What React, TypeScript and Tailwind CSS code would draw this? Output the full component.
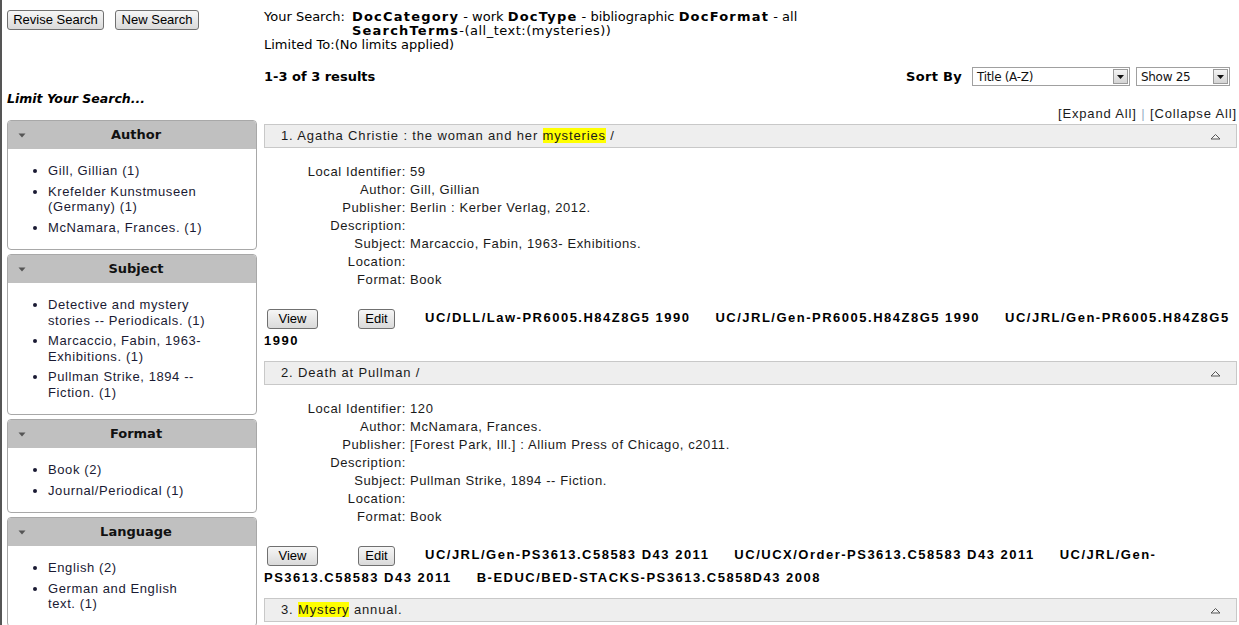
import React from "react";

const facets = [
  { title: "Author", items: ["Gill, Gillian (1)", "Krefelder Kunstmuseen (Germany) (1)", "McNamara, Frances. (1)"] },
  {
    title: "Subject",
    items: ["Detective and mystery stories -- Periodicals. (1)", "Marcaccio, Fabin, 1963- Exhibitions. (1)", "Pullman Strike, 1894 -- Fiction. (1)"],
  },
  { title: "Format", items: ["Book (2)", "Journal/Periodical (1)"] },
  { title: "Language", items: ["English (2)", "German and English text. (1)"] },
];

type Result = {
  n: number;
  title: React.ReactNode;
  fields: [string, string][];
  calls: string[];
};

const HL = ({ children }: { children: React.ReactNode }) => <span className="bg-[#ffff00]">{children}</span>;

const results: Result[] = [
  {
    n: 1,
    title: (
      <>
        Agatha Christie : the woman and her <HL>mysteries</HL> /
      </>
    ),
    fields: [
      ["Local Identifier:", "59"],
      ["Author:", "Gill, Gillian"],
      ["Publisher:", "Berlin : Kerber Verlag, 2012."],
      ["Description:", ""],
      ["Subject:", "Marcaccio, Fabin, 1963- Exhibitions."],
      ["Location:", ""],
      ["Format:", "Book"],
    ],
    calls: ["UC/DLL/Law-PR6005.H84Z8G5 1990", "UC/JRL/Gen-PR6005.H84Z8G5 1990", "UC/JRL/Gen-PR6005.H84Z8G5 1990"],
  },
  {
    n: 2,
    title: <>Death at Pullman /</>,
    fields: [
      ["Local Identifier:", "120"],
      ["Author:", "McNamara, Frances."],
      ["Publisher:", "[Forest Park, Ill.] : Allium Press of Chicago, c2011."],
      ["Description:", ""],
      ["Subject:", "Pullman Strike, 1894 -- Fiction."],
      ["Location:", ""],
      ["Format:", "Book"],
    ],
    calls: [
      "UC/JRL/Gen-PS3613.C58583 D43 2011",
      "UC/UCX/Order-PS3613.C58583 D43 2011",
      "UC/JRL/Gen-PS3613.C58583 D43 2011",
      "B-EDUC/BED-STACKS-PS3613.C5858D43 2008",
    ],
  },
];

const btn =
  "inline-block align-middle h-[20px] leading-[18px] border border-[#707070] rounded-[3px] bg-linear-to-b from-[#f6f6f6] to-[#dadada] text-[13px] text-black font-['Liberation_Sans',Arial,sans-serif] font-normal tracking-normal text-center";

function DownTri() {
  return (
    <svg width="8" height="5" viewBox="0 0 8 5" className="shrink-0">
      <polygon points="0.5,0.5 7.5,0.5 4,4.5" fill="#555" />
    </svg>
  );
}

function UpTri() {
  return (
    <svg width="11" height="7" viewBox="0 0 11 7" className="shrink-0">
      <polygon points="1,6 5.5,1.5 10,6" fill="#f4f4f4" stroke="#555" strokeWidth="1" />
    </svg>
  );
}

function SelectBox({ label, w }: { label: string; w: string }) {
  return (
    <div className={`${w} h-[19px] border border-[#a0a0a0] bg-white flex items-center justify-between pl-[4px] pr-[1px]`}>
      <span className="text-[12px] font-['DejaVu_Sans',Verdana,sans-serif] text-[#111] leading-none tracking-[-0.3px]">{label}</span>
      <span className="w-[15px] h-[15px] border border-[#9a9a9a] bg-linear-to-b from-[#f4f4f4] to-[#d4d4d4] flex items-center justify-center">
        <svg width="7" height="4" viewBox="0 0 7 4">
          <polygon points="0,0 7,0 3.5,4" fill="#111" />
        </svg>
      </span>
    </div>
  );
}

function ResultBlock({ r }: { r: Result }) {
  return (
    <div>
      <div className="h-[24px] border border-[#c8c8c8] bg-[#eeeeee] flex items-center justify-between pl-[16px] pr-[15px] text-[13px] tracking-[0.85px] text-[#1a1a1a]">
        <span>
          {r.n}. {r.title}
        </span>
        <UpTri />
      </div>
      <div className="mt-[15px] grid grid-cols-[142px_1fr] gap-x-[4px] text-[13px] leading-[18px] tracking-[0.6px] text-[#1a1a1a]">
        {r.fields.map(([k, v], i) => (
          <React.Fragment key={i}>
            <div className="text-right">{k}</div>
            <div>{v}</div>
          </React.Fragment>
        ))}
      </div>
      <div className="mt-[17px] pb-[9px] text-[13px] leading-[23px] font-bold tracking-[1.5px] text-black">
        <button className={`${btn} ml-[3px] w-[51px]`}>View</button>
        <button className={`${btn} ml-[40px] w-[37px]`}>Edit</button>
        {r.calls.map((c, i) => (
          <span key={i} className={i === 0 ? "ml-[30px]" : "ml-[25px]"}>
            {c}
          </span>
        ))}
      </div>
    </div>
  );
}

export default function App() {
  return (
    <div className="w-[1239px] h-[625px] overflow-hidden bg-white flex border-l-2 border-[#555] font-['Liberation_Sans',Arial,sans-serif] text-black">
      <aside className="w-[255px] shrink-0 pl-[5px] pt-[10px]">
        <div className="flex gap-[11px]">
          <button className={`${btn} w-[97px]`}>Revise Search</button>
          <button className={`${btn} w-[84px]`}>New Search</button>
        </div>
        <div className="mt-[62px] h-[14px] leading-[14px] text-[12.5px] font-bold italic font-['DejaVu_Sans',Verdana,sans-serif]">
          Limit Your Search...
        </div>
        <div className="mt-[14px] flex flex-col gap-[4px]">
          {facets.map((f) => (
            <div key={f.title} className="border border-[#a8a8a8] rounded-[4px] overflow-hidden">
              <div className="h-[28px] bg-[#c0c0c0] flex items-center pl-[10px] pr-[10px]">
                <DownTri />
                <div className="flex-1 text-center text-[13px] font-bold font-['DejaVu_Sans',Verdana,sans-serif] text-[#111]">
                  {f.title}
                </div>
              </div>
              <ul className="list-disc pl-[40px] pr-[50px] pt-[14px] pb-[14px] flex flex-col gap-[5px] text-[13px] leading-[15.5px] tracking-[0.6px] text-[#1a1a33] marker:text-[#1a1a33]">
                {f.items.map((it) => (
                  <li key={it}>{it}</li>
                ))}
              </ul>
            </div>
          ))}
        </div>
      </aside>

      <main className="ml-[7px] w-[974px] shrink-0 pt-[10px]">
        <div className="text-[13px] leading-[14px] font-['DejaVu_Sans',Verdana,sans-serif] text-black">
          <div className="flex">
            <span className="w-[88px] shrink-0">Your Search:</span>
            <div>
              <div>
                <b className="tracking-[1.2px]">DocCategory</b> - work <b className="tracking-[1.2px]">DocType</b> - bibliographic{" "}
                <b className="tracking-[1.2px]">DocFormat</b> - all
              </div>
              <div>
                <b className="tracking-[1.2px]">SearchTerms</b>
                <span className="tracking-[0.5px]">-(all_text:(mysteries))</span>
              </div>
            </div>
          </div>
          <div>Limited To:(No limits applied)</div>
        </div>

        <div className="mt-[15px] h-[19px] flex items-center justify-between pr-[8px]">
          <span className="text-[13px] font-bold font-['DejaVu_Sans',Verdana,sans-serif]">1-3 of 3 results</span>
          <div className="flex items-center">
            <span className="text-[13px] font-bold font-['DejaVu_Sans',Verdana,sans-serif] tracking-[0.3px] mr-[10px]">Sort By</span>
            <SelectBox label="Title (A-Z)" w="w-[158px]" />
            <div className="w-[6px]" />
            <SelectBox label="Show 25" w="w-[94px]" />
          </div>
        </div>

        <div className="mt-[21px] h-[14px] leading-[14px] text-right text-[13px] tracking-[0.85px] text-[#1a1a1a] pr-[1px]">
          [Expand All] <span className="text-[#9ab0c4]">|</span> [Collapse All]
        </div>

        <div className="mt-[3px] w-[973px]">
          {results.map((r) => (
            <ResultBlock key={r.n} r={r} />
          ))}
          <div className="h-[24px] border border-[#c8c8c8] bg-[#eeeeee] flex items-center justify-between pl-[16px] pr-[15px] text-[13px] tracking-[0.85px] text-[#1a1a1a]">
            <span>
              3. <HL>Mystery</HL> annual.
            </span>
            <UpTri />
          </div>
        </div>
      </main>
    </div>
  );
}
